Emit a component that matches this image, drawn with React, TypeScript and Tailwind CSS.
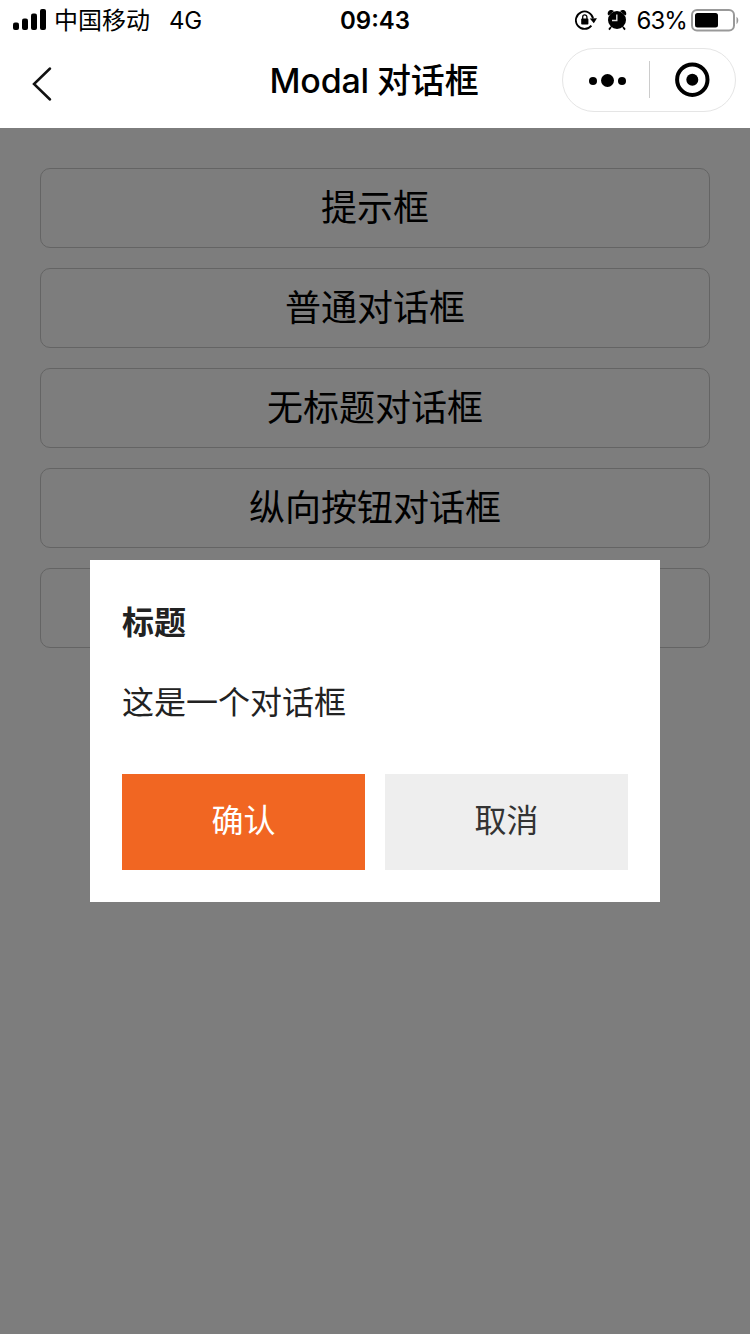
const font = "font-['Inter','Noto_Sans_CJK_SC',sans-serif]";

const demos = ["提示框", "普通对话框", "无标题对话框", "纵向按钮对话框", ""];

function StatusBar() {
  return (
    <div className="relative flex h-10 items-center justify-between pl-[13px] pr-[11px] text-2xl leading-none text-black">
      <div className="flex items-center">
        <svg width="34" height="22" viewBox="0 0 34 22" fill="currentColor">
          <rect x="0" y="13.5" width="6" height="7.5" rx="2" />
          <rect x="9" y="9.5" width="6" height="11.5" rx="2" />
          <rect x="18" y="4.5" width="6" height="16.5" rx="2" />
          <rect x="27" y="0" width="6" height="21" rx="2" />
        </svg>
        <span className="ml-[7px] pt-0.5">中国移动</span>
        <span className="ml-[19px] pt-0.5 tracking-[-0.3px]">4G</span>
      </div>
      <span className="absolute left-1/2 top-[9px] -translate-x-1/2 font-semibold">09:43</span>
      <div className="flex items-center">
        <svg width="22" height="22" viewBox="0 0 22 22" fill="none" stroke="currentColor" strokeWidth="1.8">
          <path d="M16.4 16.6A8.7 8.7 0 1 1 18.1 9.5" />
          <path d="M14.8 9.6 22 9.2 18.8 14.2z" fill="currentColor" stroke="none" />
          <rect x="6.2" y="9.6" width="7.2" height="6" rx="0.8" fill="currentColor" stroke="none" />
          <path d="M7.7 10V8a2.1 2.1 0 0 1 4.2 0v2" strokeWidth="1.3" />
        </svg>
        <svg className="ml-[10px]" width="20" height="22" viewBox="0 0 20 22" fill="currentColor">
          <circle cx="10" cy="11" r="9" />
          <path d="M0.8 5.4C0.2 2.6 2.6 0.4 5.4 1.2L7 2 1.8 6.6zM19.2 5.4C19.8 2.6 17.4 0.4 14.6 1.2L13 2l5.2 4.6z" />
          <path d="M4 18l-2 2.6M16 18l2 2.6" stroke="currentColor" strokeWidth="1.8" />
          <path d="M9.8 5.5v6H5" stroke="#ddd" strokeWidth="1.4" fill="none" />
        </svg>
        <span className="ml-[9px] pt-0.5 tracking-[-0.9px]">63%</span>
        <svg className="ml-1" width="48" height="23" viewBox="0 0 48 23">
          <rect x="1" y="1" width="42" height="20.5" rx="5" fill="none" stroke="#999" strokeWidth="2" />
          <rect x="4" y="4" width="23" height="14.5" rx="2.5" />
          <path d="M45.5 7.8v7.4c2.4-1.4 2.4-6 0-7.4" fill="#999" />
        </svg>
      </div>
    </div>
  );
}

export default function App() {
  return (
    <div className={`h-[1334px] w-[750px] overflow-hidden bg-[#7d7d7d] ${font}`}>
      <header className="h-32 bg-white">
        <StatusBar />
        <div className="relative flex h-20 items-center justify-center">
          <svg className="absolute left-[31px] top-[26px]" width="21" height="36" viewBox="0 0 21 36" fill="none" stroke="#111" strokeWidth="2.5" strokeLinecap="round">
            <path d="M19 2.5 3 18l16 15.5" />
          </svg>
          <h1 className="pr-0.5 pt-0.5 text-[34px] font-medium leading-none tracking-[-0.2px] [word-spacing:-0.8px]">Modal 对话框</h1>
          <div className="absolute right-[14px] top-2 flex h-16 w-[174px] items-center rounded-full border border-[#e5e5e5]">
            <svg width="172" height="62" viewBox="0 0 172 62">
              <circle cx="30" cy="32" r="4" />
              <circle cx="44.5" cy="31.5" r="6.5" />
              <circle cx="59" cy="32" r="4" />
              <path d="M86.5 12v37" stroke="#ccc" />
              <circle cx="129.3" cy="30.7" r="15.2" fill="none" stroke="black" strokeWidth="4" />
              <circle cx="129.3" cy="30.7" r="6" />
            </svg>
          </div>
        </div>
      </header>

      <main className="flex flex-col gap-5 px-10 pt-10">
        {demos.map((label, i) => (
          <button
            key={i}
            className="flex h-20 items-center justify-center rounded-[10px] border border-[#646464] text-4xl text-black"
          >
            {label}
          </button>
        ))}
      </main>

      {/* Dialog */}
      <section className="absolute left-[90px] top-[560px] h-[342px] w-[570px] bg-white px-8 pt-10">
        <h2 className="h-12 text-[32px] font-bold leading-[46px] text-[#222]">标题</h2>
        <p className="mt-8 h-12 text-[32px] leading-[46px] text-[#222]">这是一个对话框</p>
        <div className="mt-[46px] flex gap-5 text-[32px]">
          <button className="h-24 flex-1 bg-[#f16622] pb-0.5 text-white">确认</button>
          <button className="h-24 flex-1 bg-[#eee] pb-0.5 text-[#333]">取消</button>
        </div>
      </section>
    </div>
  );
}
